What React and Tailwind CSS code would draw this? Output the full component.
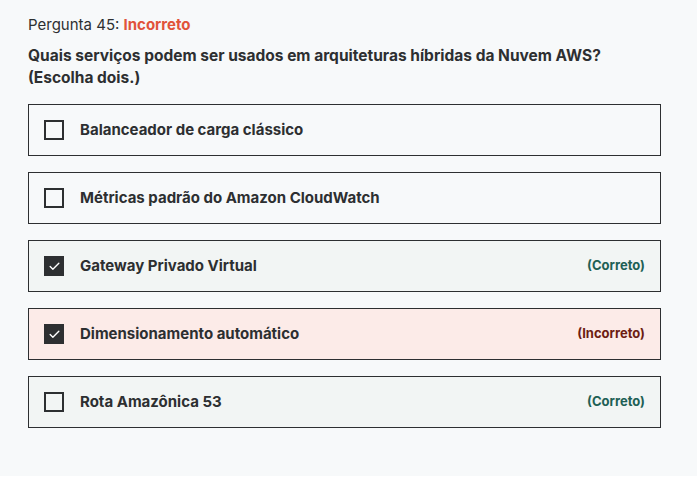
import { Check } from 'lucide-react'

const options = [
  { label: 'Balanceador de carga clássico', checked: false, status: null },
  { label: 'Métricas padrão do Amazon CloudWatch', checked: false, status: null },
  { label: 'Gateway Privado Virtual', checked: true, status: 'correct' },
  { label: 'Dimensionamento automático', checked: true, status: 'incorrect' },
  { label: 'Rota Amazônica 53', checked: false, status: 'correct' },
]

function Option({ label, checked, status }) {
  const bg =
    status === 'correct' ? 'bg-[#f2f5f4]' : status === 'incorrect' ? 'bg-[#fcebe8]' : 'bg-[#f7f9fa]'
  return (
    <div className={`flex items-center h-[52px] border border-[#2d2f31] pl-[15px] pr-[15px] ${bg}`}>
      {checked ? (
        <div className="w-5 h-5 bg-[#2d2f31] flex items-center justify-center shrink-0">
          <Check size={13} strokeWidth={2.5} className="text-white" />
        </div>
      ) : (
        <div className="w-5 h-5 border-2 border-[#2d2f31] shrink-0" />
      )}
      <span className="ml-4 flex-1 text-[15px] font-bold text-[#2d2f31]">{label}</span>
      {status === 'correct' && (
        <span className="text-[13px] font-bold text-[#1e6055]">(Correto)</span>
      )}
      {status === 'incorrect' && (
        <span className="text-[13px] font-bold text-[#6d1d13]">(Incorreto)</span>
      )}
    </div>
  )
}

export default function App() {
  return (
    <div className="w-[697px] h-[502px] bg-white font-['Inter',sans-serif]">
      <div className="h-[476px] bg-[#f7f9fa] pt-[14px] px-7">
        <div className="w-[633px]">
          <p className="text-[15px] leading-[22px] text-[#2d2f31]">
            Pergunta 45: <span className="font-bold text-[#e1533a]">Incorreto</span>
          </p>
          <p className="mt-[9px] text-[15.5px] leading-[22px] font-bold text-[#2d2f31]">
            Quais serviços podem ser usados em arquiteturas híbridas da Nuvem AWS?
            <br />
            (Escolha dois.)
          </p>
          <div className="mt-[15px] flex flex-col gap-4">
            {options.map(o => (
              <Option key={o.label} {...o} />
            ))}
          </div>
        </div>
      </div>
    </div>
  )
}
